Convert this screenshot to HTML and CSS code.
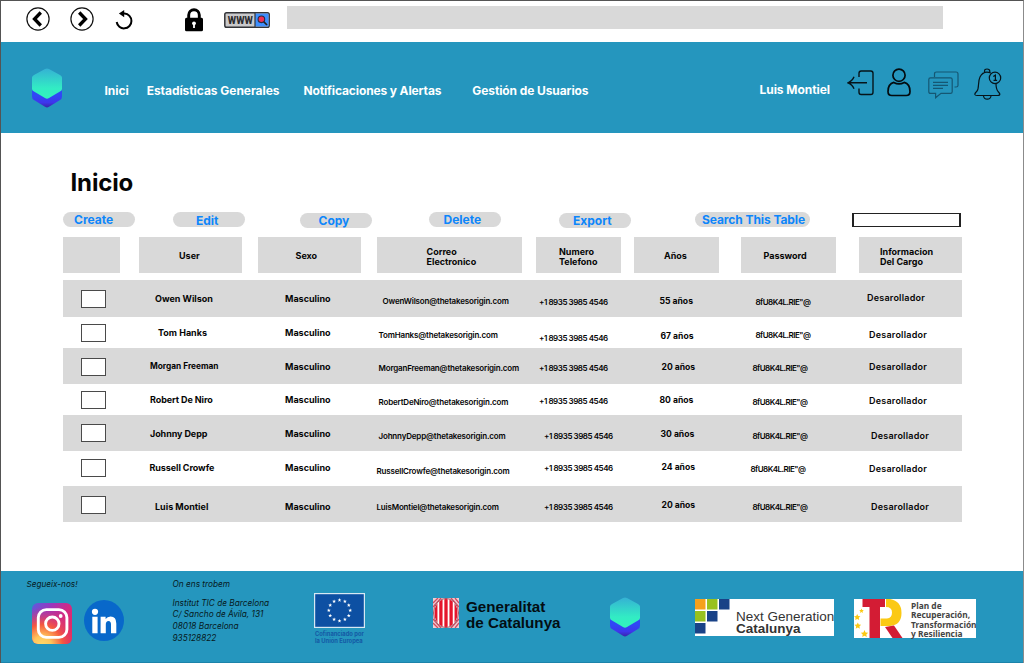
FILE: index.html
```html
<!DOCTYPE html>
<html lang="es">
<head>
<meta charset="utf-8">
<title>Inicio</title>
<link rel="stylesheet" href="styles.css">
</head>
<body>
<div class="page">
<svg width="0" height="0" aria-hidden="true">
  <defs>
    <linearGradient id="hexTop" x1="0" y1="0" x2="0" y2="1"><stop offset="0" stop-color="#35b1d4"/><stop offset=".65" stop-color="#32ecc4"/><stop offset="1" stop-color="#32f3bb"/></linearGradient>
    <linearGradient id="hexLow" x1="0" y1="0" x2="0" y2="1"><stop offset=".4" stop-color="#3048f5"/><stop offset=".75" stop-color="#3e35ec"/><stop offset="1" stop-color="#3a25a8"/></linearGradient>
    <symbol id="hex" viewBox="0 0 30 40"><path d="M0 20V28.500Q0 31 2 32L13 38.800Q15 40 17 38.800L28 32Q30 31 30 28.500V20z" fill="url(#hexLow)"/><path d="M0 9.500Q0 8 2 7L13 .9Q15 0 17 .9L28 7Q30 8 30 9.500V21Q30 22.500 28 23.500L17 30Q15 31.300 13 30L2 23.500Q0 22.500 0 21z" fill="url(#hexTop)"/></symbol>
  </defs>
</svg>

<div class="browser">
  <svg class="b-back" width="24" height="24" viewBox="0 0 24 24"><circle cx="12" cy="12" r="11.100" fill="#fff" stroke="#111" stroke-width="1.200"/><path d="M14.800 5.500L8.500 12l6.300 6.500" fill="none" stroke="#000" stroke-width="3.300"/></svg>
  <svg class="b-next" width="24" height="24" viewBox="0 0 24 24"><circle cx="12" cy="12" r="11.100" fill="#fff" stroke="#111" stroke-width="1.200"/><path d="M9.200 5.500L15.500 12l-6.300 6.500" fill="none" stroke="#000" stroke-width="3.300"/></svg>
  <svg class="b-reload" width="18" height="20" viewBox="0 0 18 20"><path d="M8 3.600H9.500A7.400 7.400 0 1 1 1.700 12" fill="none" stroke="#000" stroke-width="2"/><path d="M3.900 3.600L9.200 0v7.200z"/></svg>
  <svg class="b-lock" width="18" height="24" viewBox="0 0 18 24"><path d="M3.700 11V7a5.300 5.300 0 0 1 10.600 0v4" fill="none" stroke="#000" stroke-width="2.900"/><rect y="9.700" width="18" height="13.500" rx="1.500"/><circle cx="9" cy="15.300" r="1.900" fill="#fff"/><path d="M8.100 15h1.800v5H8.100z" fill="#fff"/></svg>
  <svg class="b-www" width="46" height="16" viewBox="0 0 46 16"><rect x=".8" y=".8" width="44.400" height="14.400" rx="1.800" fill="#c9c9cb" stroke="#333438" stroke-width="1.500"/><path d="M31 1.600h13.500v12.800H31z" fill="#3e8fff"/><path d="M31 1v14" stroke="#333438" stroke-width="1.200"/><text x="3.800" y="12" font-family="Roboto, sans-serif" font-size="10.500" font-weight="800" textLength="25" lengthAdjust="spacing" fill="#2b2b2e"><tspan textLength="25" lengthAdjust="spacingAndGlyphs">WWW</tspan></text><path d="M39.500 9.500l3.500 3.500" stroke="#222" stroke-width="1.700"/><circle cx="37.400" cy="7.300" r="3.300" fill="#ef2f54" stroke="#2b2b44" stroke-width="1.100"/></svg>
  <div class="address"></div>
</div>

<header class="top">
  <svg class="brand" width="30" height="40"><use href="#hex"/></svg>
  <nav class="menu"><a>Inici</a><a>Estadísticas Generales</a><a>Notificaciones y Alertas</a><a class="low">Gestión de Usuarios</a></nav>
  <span class="account">Luis Montiel</span>
  <svg class="i-exit" width="27" height="26" viewBox="0 0 27 26"><path d="M12 7V3.200Q12 1 14.200 1H23.800Q26 1 26 3.200V22.300Q26 24.500 23.800 24.500H14.200Q12 24.500 12 22.300V18.500M20 12.800H1M7 6.800Q5.500 11 1 12.800Q5.500 14.600 7 18.800" fill="none" stroke="#06141a" stroke-width="1.400"/></svg>
  <svg class="i-user" width="24" height="29" viewBox="0 0 24 29"><circle cx="12" cy="7.200" r="6.100" fill="none" stroke="#030b0f" stroke-width="1.700"/><path d="M6.800 14.400Q1 16 1 23.500Q1 27.500 4.800 27.500H19.200Q23 27.500 23 23.500Q23 16 17.200 14.400Q12 17.300 6.800 14.400z" fill="none" stroke="#030b0f" stroke-width="1.700" stroke-linejoin="round"/></svg>
  <svg class="i-chat" width="31" height="28" viewBox="0 0 31 28"><path d="M6.500 6V3Q6.500 1 8.500 1H28Q30 1 30 3V14.500Q30 16 28 16H26.500M2.500 6.900H22.500Q24.200 6.900 24.200 8.600V20.700Q24.200 22.400 22.500 22.400H13L7.600 26.800V22.400H2.500Q.8 22.400 .8 20.700V8.600Q.8 6.900 2.500 6.900zM5 11.300h15M5 14.300h15M5 17.300h10" fill="none" stroke="#155773" stroke-width="1.200"/></svg>
  <svg class="i-bell" width="28" height="32" viewBox="0 0 28 32"><g fill="none" stroke="#06141a" stroke-width="1.200"><path d="M10.500 5V3.200Q10.500 1 13 1Q15.800 1 15.800 3.200V4.500M17 5Q9.500 2 6 9C3.500 14 5.500 20 3 23Q.8 25.200 .8 26.500Q1 27.500 3 27.500H23.500Q26 27.500 25.800 26Q25.500 25 24 23.500Q22 21 22 15.500M9.500 28Q10 31.200 13.200 31.200Q16.500 31.200 17 28"/><circle cx="21" cy="9.900" r="5.700"/></g><path d="M19.300 8.600L21.400 7.200V12.400M19.500 12.400h3.600" fill="none" stroke="#06141a" stroke-width="1.200"/></svg>
</header>

<main>
  <h1>Inicio</h1>
  <div class="tools">
    <button class="t1">Create</button><button class="t2">Edit</button><button class="t3">Copy</button><button class="t4">Delete</button><button class="t5">Export</button><button class="t6">Search This Table</button>
    <div class="search"></div>
  </div>
  <div class="heads">
    <div class="h-check"></div><div class="h-user">User</div><div class="h-sexo">Sexo</div><div class="h-mail">Correo<br>Electronico</div><div class="h-tel">Numero<br>Telefono</div><div class="h-age">Años</div><div class="h-pass">Password</div><div class="h-job">Informacion<br>Del Cargo</div>
  </div>
  <div class="row r1"><i class="check"></i><span class="user">Owen Wilson</span><span class="sexo">Masculino</span><span class="mail">OwenWilson@thetakesorigin.com</span><span class="tel">+1 8935 3985 4546</span><span class="age">55 años</span><span class="pass">8fU8K4L.RIE"@</span><span class="job">Desarollador</span></div>
  <div class="row r2"><i class="check"></i><span class="user">Tom Hanks</span><span class="sexo">Masculino</span><span class="mail">TomHanks@thetakesorigin.com</span><span class="tel">+1 8935 3985 4546</span><span class="age">67 años</span><span class="pass">8fU8K4L.RIE"@</span><span class="job">Desarollador</span></div>
  <div class="row r3"><i class="check"></i><span class="user">Morgan Freeman</span><span class="sexo">Masculino</span><span class="mail">MorganFreeman@thetakesorigin.com</span><span class="tel">+1 8935 3985 4546</span><span class="age">20 años</span><span class="pass">8fU8K4L.RIE"@</span><span class="job">Desarollador</span></div>
  <div class="row r4"><i class="check"></i><span class="user">Robert De Niro</span><span class="sexo">Masculino</span><span class="mail">RobertDeNiro@thetakesorigin.com</span><span class="tel">+1 8935 3985 4546</span><span class="age">80 años</span><span class="pass">8fU8K4L.RIE"@</span><span class="job">Desarollador</span></div>
  <div class="row r5"><i class="check"></i><span class="user">Johnny Depp</span><span class="sexo">Masculino</span><span class="mail">JohnnyDepp@thetakesorigin.com</span><span class="tel">+1 8935 3985 4546</span><span class="age">30 años</span><span class="pass">8fU8K4L.RIE"@</span><span class="job">Desarollador</span></div>
  <div class="row r6"><i class="check"></i><span class="user">Russell Crowfe</span><span class="sexo">Masculino</span><span class="mail">RussellCrowfe@thetakesorigin.com</span><span class="tel">+1 8935 3985 4546</span><span class="age">24 años</span><span class="pass">8fU8K4L.RIE"@</span><span class="job">Desarollador</span></div>
  <div class="row r7"><i class="check"></i><span class="user">Luis Montiel</span><span class="sexo">Masculino</span><span class="mail">LuisMontiel@thetakesorigin.com</span><span class="tel">+1 8935 3985 4546</span><span class="age">20 años</span><span class="pass">8fU8K4L.RIE"@</span><span class="job">Desarollador</span></div>
</main>

<footer>
  <section class="follow">
    <p>Segueix-nos!</p>
    <div class="social">
      <svg class="insta" width="40" height="41" viewBox="0 0 40 41">
        <defs><linearGradient id="ig" x1="0" y1="0" x2="1" y2=".7"><stop offset="0" stop-color="#5a5ce0"/><stop offset=".35" stop-color="#9a37bd"/><stop offset=".65" stop-color="#d12b86"/><stop offset="1" stop-color="#e5275f"/></linearGradient><radialGradient id="igWarm" cx=".25" cy="1.050" r=".95"><stop offset="0" stop-color="#ffdc6c"/><stop offset=".25" stop-color="#ffc65c"/><stop offset=".55" stop-color="#f5583f"/><stop offset="1" stop-color="#d42e80" stop-opacity="0"/></radialGradient></defs>
        <rect width="40" height="41" rx="6" fill="url(#ig)"/><rect width="40" height="41" rx="6" fill="url(#igWarm)"/>
        <g fill="none" stroke="#fff" stroke-width="2.900"><rect x="6.300" y="6.600" width="28.600" height="27.800" rx="8"/><circle cx="20.300" cy="20.700" r="6.700"/></g><circle cx="28.700" cy="13" r="1.900" fill="#fff"/>
      </svg>
      <svg class="linked" width="40" height="41" viewBox="0 0 40 41"><ellipse cx="20" cy="20.500" rx="20" ry="20.500" fill="#0868ca"/><g fill="#fff"><circle cx="11" cy="11.800" r="3.100"/><path d="M8.300 16.800h5.300v16.500H8.300zM16.600 16.800h5v2.300q1.700-2.700 5-2.700q5.700 0 5.700 7v9.900H27v-8.800q0-3.600-2.500-3.600q-2.700 0-2.700 3.700v8.700h-5.200z"/></g></svg>
    </div>
  </section>
  <section class="find">
    <p>On ens trobem</p>
    <address>Institut TIC de Barcelona<br>C/ Sancho de Ávila, 131<br>08018 Barcelona<br>935128822</address>
  </section>
  <section class="eu">
    <svg width="51" height="35" viewBox="0 0 51 35"><rect x=".6" y=".6" width="49.800" height="33.800" fill="#0d50a3" stroke="#d7e8f3" stroke-width="1.200"/>
      <defs><path id="star" d="M0-1.900L.55-.6 1.900-.55.8.3 1.200 1.700 0 .9-1.200 1.700-.8.3-1.900-.55-.55-.6z" fill="#fff"/></defs>
      <use href="#star" x="25.500" y="7"/><use href="#star" x="30.900" y="8.400"/><use href="#star" x="34.800" y="12.200"/><use href="#star" x="36.200" y="17.400"/><use href="#star" x="34.800" y="22.600"/><use href="#star" x="30.900" y="26.400"/><use href="#star" x="25.500" y="27.800"/><use href="#star" x="20.100" y="26.400"/><use href="#star" x="16.200" y="22.600"/><use href="#star" x="14.800" y="17.400"/><use href="#star" x="16.200" y="12.200"/><use href="#star" x="20.100" y="8.400"/></svg>
    <p>Cofinanciado por<br>la Unión Europea</p>
  </section>
  <section class="gencat">
    <svg width="26" height="30" viewBox="0 0 26 30"><defs><clipPath id="oval"><ellipse cx="13" cy="15" rx="11.600" ry="14"/></clipPath></defs><rect width="26" height="30" fill="#eecdd4"/><path d="M0 9L8 0M0 5L5 0M18 0l8 9M22 0l4 5M0 21l8 9M0 25l5 5M18 30l8-9M22 30l4-5" stroke="#d64a5e" stroke-width="1.300"/><ellipse cx="13" cy="15" rx="12.500" ry="14.600" fill="#fff" stroke="#9d5868" stroke-width="1"/><g clip-path="url(#oval)" stroke="#e5152c" stroke-width="3.300"><path d="M2.800 0v30M7.900 0v30M13 0v30M18.100 0v30M23.200 0v30"/></g></svg>
    <p>Generalitat<br>de Catalunya</p>
  </section>
  <svg class="hexfoot" width="30" height="40"><use href="#hex"/></svg>
  <section class="nextgen">
    <svg width="35" height="36" viewBox="0 0 35 36"><path d="M0 0h10.500v10.500H0z" fill="#f6a01c"/><path d="M12 0h10.500v10.500H12zM0 12h10.500v10.500H0z" fill="#98c11f"/><path d="M24 0h10.500v10.500H24zM12 12h10.500v10.500H12zM0 24h10.500v10.500H0z" fill="#194287"/></svg>
    <p>Next Generation<br><b>Catalunya</b></p>
  </section>
  <section class="plan">
    <svg width="50" height="39" viewBox="0 0 50 39"><path d="M8.500 0H31V8H26V39H15.500V8H8.500z" fill="#d31c34"/><path d="M32 0H36Q47.500 2 47.500 14Q47.500 26 36 27H26.500V19.500H33Q38 19 38 13.500Q38 8 32 8z" fill="#fbc914"/><path d="M31 28L40 26.500 48.500 39H38.500z" fill="#d31c34"/><g fill="#fbc914"><path d="M7.500 9.500l.7 1.500 1.600.1-1.200 1.100.4 1.700-1.500-.9-1.500.9.400-1.700-1.200-1.100 1.600-.1z"/><path d="M3.200 15l1 2 2.200.3-1.600 1.500.4 2.200-2-1-2 1 .4-2.200L0 17.300l2.200-.3zM3.800 23.500l1 2.100 2.300.2-1.700 1.600.5 2.300-2.100-1.200-2.100 1.200.5-2.300-1.700-1.600 2.300-.2zM10.500 31l1.100 2.400 2.600.3-1.900 1.800.5 2.600-2.300-1.300-2.300 1.300.5-2.600-1.900-1.800 2.600-.3z"/></g></svg>
    <p>Plan de<br>Recuperación,<br>Transformación<br>y Resiliencia</p>
  </section>
</footer>
</div>
</body>
</html>
```
FILE: styles.css
```css
* { box-sizing: border-box; }
body { margin: 0; font-family: Inter, "Liberation Sans", sans-serif; color: #050505; background: #fff; }
p, h1 { margin: 0; }
svg { display: block; flex: none; }
.page { width: 1024px; height: 663px; overflow: hidden; border: 1px solid #545454; border-right-color: #8b8b8b; border-bottom: 0; display: flex; flex-direction: column; white-space: nowrap; }

.browser { height: 41px; flex: none; display: flex; align-items: flex-start; padding-left: 25px; }
.b-back { margin-top: 6px; }
.b-next { margin: 6px 0 0 20px; }
.b-reload { margin: 9px 0 0 21px; }
.b-lock { margin: 7px 0 0 52px; }
.b-www { margin: 11px 0 0 21px; }
.address { width: 656px; height: 23px; margin: 5px 0 0 17px; background: #d9d9d9; }

.top { height: 91px; flex: none; display: flex; align-items: flex-start; padding-left: 31px; background: #2596be; }
.brand { margin-top: 26px; }
.menu { display: flex; margin: 41px 0 0 42.5px; width: 655px; color: #fff; font-size: 12px; line-height: 15px; font-weight: 700; }
.menu a { margin-right: 18px; letter-spacing: -.05px; }
.menu a:nth-child(2) { margin-right: 24px; }
.menu a:nth-child(3) { margin-right: 25px; letter-spacing: -.13px; }
.menu a.low { margin-left: 6px; letter-spacing: -.1px; }
.account { width: 71px; margin-top: 40px; color: #fff; font-size: 12px; line-height: 15px; font-weight: 700; letter-spacing: -.05px; }
.i-exit { margin: 28px 0 0 16px; }
.i-user { margin: 26px 0 0 13px; }
.i-chat { margin: 29px 0 0 17px; }
.i-bell { margin: 26px 0 0 15px; }

main { height: 438px; flex: none; padding: 37px 0 0 62px; width: 962px; }
h1 { font-size: 24px; line-height: 26px; font-weight: 700; padding-left: 7.5px; height: 42px; letter-spacing: -.15px; }
.tools { display: flex; height: 16px; width: 898px; }
.tools button { font: 700 12px/15px Inter, sans-serif; color: #0d86fb; background: #d9d9d9; border: 0; border-radius: 8px; height: 15px; width: 72px; padding: 0; text-align: left; flex: none; white-space: nowrap; }
.tools .t1 { padding-left: 11px; margin-right: 38px; }
.tools .t2 { padding: 1px 0 0 23px; margin-right: 55px; }
.tools .t3 { padding-left: 18.5px; margin: 1px 56.5px 0 0; }
.tools .t4 { padding-left: 15px; margin-right: 58.5px; }
.tools .t5 { padding-left: 14px; margin: 1px 64px 0 0; }
.tools .t6 { width: 115px; padding-left: 7px; letter-spacing: -.08px; }
.search { width: 109px; height: 14px; margin: 1px 0 0 42px; border: 1px solid #222; border-width: 1px 2px; }

.heads { display: flex; width: 899px; height: 36px; margin-top: 9px; font-size: 9px; line-height: 10.5px; font-weight: 700; }
.heads div { background: #d9d9d9; padding-top: 13.5px; }
.h-check { width: 57px; margin-right: 19px; }
.h-user { width: 103px; margin-right: 16px; padding-left: 40px; }
.h-sexo { width: 103px; margin-right: 16px; padding-left: 37.5px; }
.h-mail { width: 145px; margin-right: 14px; padding-left: 49.5px; }
.h-tel { width: 85px; margin-right: 13px; padding-left: 23px; }
.h-age { width: 85px; margin-right: 22px; padding-left: 30px; }
.h-pass { width: 95px; margin-right: 23px; padding-left: 22.5px; }
.h-job { width: 103px; padding-left: 21px; }
.heads .h-mail, .heads .h-tel, .heads .h-job { padding-top: 9.5px; }

.row { display: grid; grid-template-columns: 68px 136px 91px 163px 120px 91px 117px 1fr; width: 899px; padding-left: 18px; align-items: start; font-size: 9px; line-height: 12px; font-weight: 700; }
.row:nth-of-type(odd) { background: #d9d9d9; }
.check { width: 25px; height: 18px; border: 1px solid #4a4a4a; background: #fff; }
.mail, .tel, .pass { font-size: 8px; font-weight: 600; }
.mail { letter-spacing: -.18px; text-indent: .5px; }
.tel { letter-spacing: -.45px; }
.pass { letter-spacing: -.52px; text-indent: .5px; }
.age { font-size: 8.6px; text-indent: .5px; }
.job { font-weight: 600; letter-spacing: .22px; }

.r1 { height: 37px; margin-top: 7px; }
.r1 .check { margin-top: 10px; }
.r1 .user { margin: 13px 0 0 6px; }
.r1 .sexo { margin-top: 13px; }
.r1 .mail { margin: 15px 0 0 6px; }
.r1 .tel { margin-top: 16px; }
.r1 .age { margin-top: 15px; }
.r1 .pass { margin: 16px 0 0 5px; }
.r1 .job { margin-top: 12px; }

.r2 { height: 31px; }
.r2 .check { margin-top: 7px; }
.r2 .user { margin: 10px 0 0 9px; }
.r2 .sexo { margin-top: 10px; }
.r2 .mail { margin: 12px 0 0 2px; }
.r2 .tel { margin-top: 15px; }
.r2 .age { margin: 13px 0 0 1px; }
.r2 .pass { margin: 12px 0 0 5px; }
.r2 .job { margin: 12px 0 0 2px; }

.r3 { height: 36px; }
.r3 .check { margin-top: 10px; }
.r3 .user { margin: 12px 0 0 1px; font-size: 8.3px; }
.r3 .sexo { margin-top: 13px; }
.r3 .mail { margin: 14px 0 0 2px; }
.r3 .tel { margin-top: 14px; }
.r3 .age { margin: 13px 0 0 2px; }
.r3 .pass { margin: 14px 0 0 2px; }
.r3 .job { margin: 13px 0 0 2px; }

.r4 { height: 31px; }
.r4 .check { margin-top: 7px; }
.r4 .user { margin: 10px 0 0 1px; letter-spacing: -.08px; }
.r4 .sexo { margin-top: 10px; }
.r4 .mail { margin: 12px 0 0 2px; }
.r4 .tel { margin-top: 11px; }
.r4 .age { margin-top: 10px; }
.r4 .pass { margin: 12px 0 0 2px; }
.r4 .job { margin: 11px 0 0 2px; }

.r5 { height: 36px; }
.r5 .check { margin-top: 9px; }
.r5 .user { margin: 13px 0 0 1px; letter-spacing: -.08px; }
.r5 .sexo { margin-top: 13px; }
.r5 .mail { margin: 15px 0 0 2px; }
.r5 .tel { margin: 15px 0 0 5px; }
.r5 .age { margin: 13px 0 0 1px; }
.r5 .pass { margin: 15px 0 0 2px; }
.r5 .job { margin: 15px 0 0 4px; }

.r6 { height: 35px; }
.r6 .check { margin-top: 8px; }
.r6 .user { margin-top: 11px; letter-spacing: -.08px; text-indent: .5px; }
.r6 .sexo { margin-top: 11px; }
.r6 .mail { margin-top: 14px; }
.r6 .tel { margin: 11px 0 0 5px; }
.r6 .age { margin: 10px 0 0 2px; }
.r6 .pass { margin-top: 12px; }
.r6 .job { margin: 12px 0 0 2px; }

.r7 { height: 36px; }
.r7 .check { margin-top: 10px; }
.r7 .user { margin: 15px 0 0 6px; }
.r7 .sexo { margin-top: 15px; }
.r7 .mail { margin-top: 15px; }
.r7 .tel { margin: 15px 0 0 5px; }
.r7 .age { margin: 13px 0 0 2px; }
.r7 .pass { margin: 15px 0 0 2px; }
.r7 .job { margin: 15px 0 0 4px; }

footer { flex: 1; display: flex; align-items: flex-start; background: #2596be; border-bottom: 1px solid #1c83aa; color: #071a22; }
.follow { flex: none; width: 146px; padding: 7px 0 0 25.5px; font-size: 8.2px; line-height: 12px; font-style: italic; }
.social { display: flex; padding: 10px 0 0 5.5px; }
.insta { margin-top: 3px; }
.linked { margin-left: 12px; }
.find { flex: none; width: 142px; padding: 7px 0 0 25.5px; font-size: 8.25px; line-height: 12px; font-style: italic; }
.find address { margin-top: 7.5px; line-height: 11.8px; }
.eu { flex: none; width: 144px; padding: 22px 0 0 25px; color: #1459a5; font-size: 5.8px; line-height: 7px; font-weight: 700; }
.eu p { margin: 2px 0 0 1px; }
.gencat { flex: none; width: 178px; display: flex; padding: 27px 0 0 0; }
.gencat p { margin: 1px 0 0 7px; color: #030d12; font: 700 15.2px/15.5px "Liberation Sans", sans-serif; }
.hexfoot { margin: 26px 0 0 -1px; }
.nextgen { flex: none; display: flex; width: 139px; height: 37px; margin: 28px 0 0 55px; background: #fff; color: #333; font: 13.5px/12px "Liberation Sans", sans-serif; }
.nextgen p { margin: 12px 0 0 6px; }
.plan { flex: none; display: flex; width: 122px; height: 39px; margin: 28px 0 0 20px; background: #fff; color: #444; font: 700 8.4px/9.4px "Noto Sans", sans-serif; }
.plan p { margin: 2px 0 0 7px; }
```
